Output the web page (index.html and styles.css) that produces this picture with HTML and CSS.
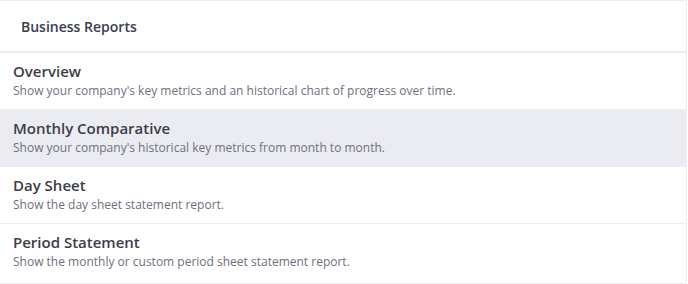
FILE: index.html
```html
<!DOCTYPE html>
<html lang="en">
<head>
    <meta charset="UTF-8">
    <meta name="viewport" content="width=device-width, initial-scale=1.0">
    <title>Business Reports</title>
    <link rel="stylesheet" href="styles.css">
</head>
<body>
<div class="card">
    <div class="card-header">
        <h3>Business Reports</h3>
    </div>
    <ul class="report-list">
        <li class="report">
            <div class="report-title">Overview</div>
            <div class="report-desc">Show your company's key metrics and an historical chart of progress over time.</div>
        </li>
        <li class="report active">
            <div class="report-title">Monthly Comparative</div>
            <div class="report-desc">Show your company's historical key metrics from month to month.</div>
        </li>
        <li class="report">
            <div class="report-title">Day Sheet</div>
            <div class="report-desc">Show the day sheet statement report.</div>
        </li>
        <li class="report">
            <div class="report-title">Period Statement</div>
            <div class="report-desc">Show the monthly or custom period sheet statement report.</div>
        </li>
    </ul>
</div>
</body>
</html>
```

FILE: styles.css
```css
body {
    font-family: "Open Sans", Arial, sans-serif;
    background-color: #fff;
    margin: 0;
    padding: 0;
}

.card {
    width: 687px;
    height: 284px;
    box-sizing: border-box;
    background-color: #fff;
    border: 1px solid #ebedf2;
    border-left: none;
}

.card-header {
    height: 50px;
    padding: 0 21px;
    display: flex;
    align-items: center;
    border-bottom: 2px solid #ebedf2;
}

.card-header h3 {
    margin: 0;
    font-size: 14px;
    font-weight: 600;
    color: #3a3c4f;
}

.report-list {
    list-style: none;
    margin: 0;
    padding: 0;
}

.report {
    height: 57px;
    padding: 7px 13px 0;
    box-sizing: border-box;
    border-bottom: 1px solid #ebedf2;
}

.report:last-child {
    border-bottom: none;
}

.report.active {
    background-color: #ebecf2;
}

.report-title {
    font-size: 15px;
    font-weight: 600;
    color: #3c3d48;
    line-height: 22px;
}

.report-desc {
    font-size: 12px;
    color: #6e7080;
    line-height: 18px;
}
```
